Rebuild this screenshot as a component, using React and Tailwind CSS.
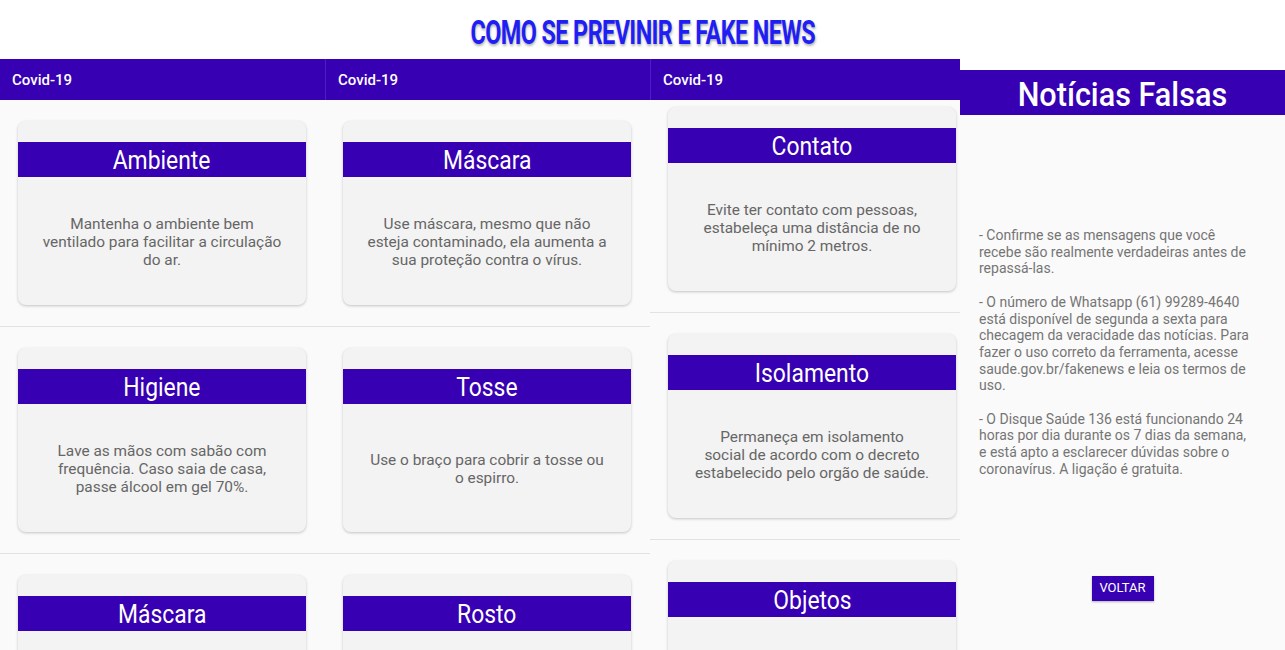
import React from "react";

const purple = "bg-[#3700b3]";

const panels = [
  {
    key: "p1",
    width: "w-[325px]",
    divider: false,
    offset: "pt-[21px]",
    cards: [
      {
        title: "Ambiente",
        lines: ["Mantenha o ambiente bem", "ventilado para facilitar a circulação", "do ar."],
      },
      {
        title: "Higiene",
        lines: ["Lave as mãos com sabão com", "frequência. Caso saia de casa,", "passe álcool em gel 70%."],
      },
      {
        title: "Máscara",
        lines: ["Use máscara ao sair de casa,", "mesmo sem sintomas."],
      },
    ],
  },
  {
    key: "p2",
    width: "w-[325px]",
    divider: true,
    offset: "pt-[21px]",
    cards: [
      {
        title: "Máscara",
        lines: ["Use máscara, mesmo que não", "esteja contaminado, ela aumenta a", "sua proteção contra o vírus."],
      },
      {
        title: "Tosse",
        lines: ["Use o braço para cobrir a tosse ou", "o espirro."],
      },
      {
        title: "Rosto",
        lines: ["Evite tocar olhos, nariz e boca", "com as mãos sujas."],
      },
    ],
  },
  {
    key: "p3",
    width: "w-[310px]",
    divider: true,
    offset: "pt-[7px]",
    cards: [
      {
        title: "Contato",
        lines: ["Evite ter contato com pessoas,", "estabeleça uma distância de no", "mínimo 2 metros."],
      },
      {
        title: "Isolamento",
        lines: ["Permaneça em isolamento", "social de acordo com o decreto", "estabelecido pelo orgão de saúde."],
      },
      {
        title: "Objetos",
        lines: ["Não compartilhe objetos de", "uso pessoal."],
      },
    ],
  },
];

const fakeNews = [
  ["- Confirme se as mensagens que você", "recebe são realmente verdadeiras antes de", "repassá-las."],
  [
    "- O número de Whatsapp (61) 99289-4640",
    "está disponível de segunda a sexta para",
    "checagem da veracidade das notícias. Para",
    "fazer o uso correto da ferramenta, acesse",
    "saude.gov.br/fakenews e leia os termos de",
    "uso.",
  ],
  [
    "- O Disque Saúde 136 está funcionando 24",
    "horas por dia durante os 7 dias da semana,",
    "e está apto a esclarecer dúvidas sobre o",
    "coronavírus. A ligação é gratuita.",
  ],
];

const Card = ({ title, lines }) => (
  <div className="w-[288px] h-[184px] shrink-0 rounded-lg bg-[#f3f3f3] shadow-[0_1px_3px_rgba(0,0,0,0.22)] pt-[21px] flex flex-col overflow-hidden">
    <div className={`h-[35px] ${purple} flex items-center justify-center text-white text-[26px] font-['Roboto']`}>
      <span className="inline-block scale-x-[0.88] pt-[2px]">{title}</span>
    </div>
    <div className="flex-1 pt-[2px] flex flex-col items-center justify-center text-center text-[15.4px] leading-[18px] text-[#666666] font-['Roboto']">
      {lines.map((l) => (
        <div key={l} className="whitespace-nowrap">
          {l}
        </div>
      ))}
    </div>
  </div>
);

const Panel = ({ width, divider, offset, cards }) => (
  <div className={`${width} shrink-0 flex flex-col overflow-hidden`}>
    <div
      className={`h-[41px] shrink-0 ${purple} flex items-center px-3 pt-[1px] text-white text-[15px] font-medium font-['Roboto'] ${
        divider ? "border-l border-[#4a1fc4]" : ""
      }`}
    >
      Covid-19
    </div>
    <div className="flex-1 bg-[#fafafa] overflow-hidden">
      {cards.map((c, i) => (
        <div
          key={c.title + i}
          className={`${i === 0 ? offset : "pt-[21px]"} pb-[21px] pl-[18px] border-b border-[#e2e2e2]`}
        >
          <Card {...c} />
        </div>
      ))}
    </div>
  </div>
);

export default function App() {
  return (
    <div className="w-[1285px] h-[650px] bg-white overflow-hidden flex flex-col">
      <div className="h-[59px] shrink-0 flex items-center justify-center pt-[5px]">
        <h1 className="inline-block scale-x-[0.71] text-[33px] font-bold text-[#1f1ff5] tracking-tight font-['Roboto'] [text-shadow:1px_2px_3px_rgba(0,0,0,0.3)] uppercase leading-none">
          Como se previnir e fake news
        </h1>
      </div>
      <div className="flex flex-1 min-h-0">
        {panels.map((p) => (
          <Panel key={p.key} {...p} />
        ))}
        <div className="w-[325px] shrink-0 flex flex-col bg-[#fafafa]">
          <div className="h-[11px] bg-white shrink-0" />
          <div className={`h-[45px] shrink-0 ${purple} flex items-center justify-center pt-[3px] text-white text-[34px] font-medium font-['Roboto']`}>
            <span className="inline-block scale-x-[0.9]">Notícias Falsas</span>
          </div>
          <div className="pt-[112px] px-[19px] text-[14px] leading-[16.7px] text-[#757575] font-['Roboto'] flex flex-col gap-[16.7px]">
            {fakeNews.map((para, i) => (
              <div key={i}>
                {para.map((l) => (
                  <div key={l} className="whitespace-nowrap">
                    {l}
                  </div>
                ))}
              </div>
            ))}
          </div>
          <div className="flex justify-center mt-[98px]">
            <button className={`w-[62px] h-[25px] ${purple} text-white text-[13px] font-['Roboto'] uppercase shadow-[0_1px_2px_rgba(0,0,0,0.3)]`}>
              Voltar
            </button>
          </div>
        </div>
      </div>
    </div>
  );
}
